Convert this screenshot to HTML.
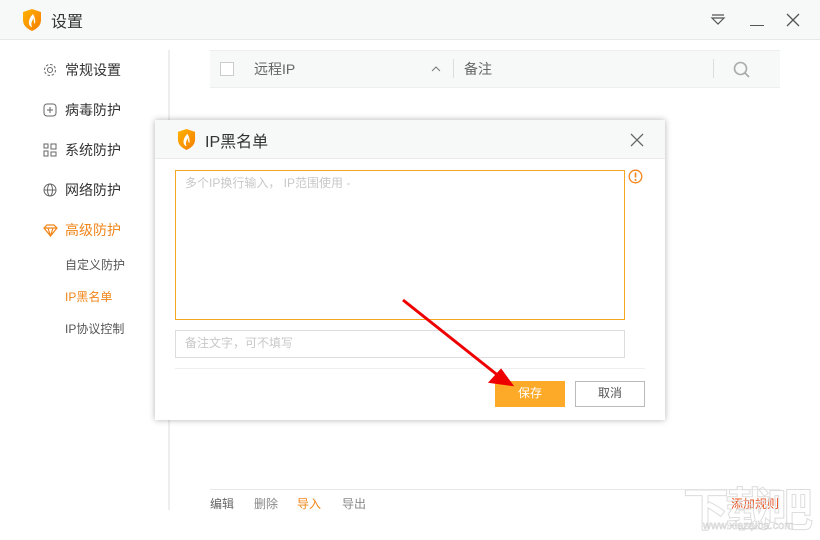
<!DOCTYPE html>
<html><head><meta charset="utf-8"><style>
*{margin:0;padding:0;box-sizing:border-box}
body{width:820px;height:540px;background:#fff;font-family:"Liberation Sans","Noto Sans CJK SC",sans-serif;position:relative;overflow:hidden;color:#333}
.a{position:absolute}
.title{left:0;top:0;width:820px;height:40px;background:#f7f8f8;border-bottom:1px solid #e8e8e8}
.nav{font-size:14px;color:#333;left:65px}
.sub{font-size:12px;color:#555;left:65px}
</style></head><body>
<div class="a title"></div>
<svg class="a" style="left:22px;top:9px" width="20" height="22" viewBox="0 0 20 22"><defs><linearGradient id="g" x1="0" y1="0" x2="1" y2="1"><stop offset="0" stop-color="#ffb300"/><stop offset="1" stop-color="#f57c00"/></linearGradient></defs><path d="M1 3 L10 0 L19 3 L19 11 Q19 18 10 22 Q1 18 1 11Z" fill="url(#g)"/><path d="M11 5 Q6 10 7 15 Q8 18 10 18 Q8 14 12 9 Q11 13 13 15 Q14 10 11 5Z" fill="#fff"/></svg>
<div class="a" style="left:51px;top:8px;font-size:16px;color:#333">设置</div>
<svg class="a" style="left:710px;top:13px" width="16" height="14"><path d="M2 2H14M2 5H14L8 11Z" stroke="#555" fill="none" stroke-width="1.2"/></svg>
<div class="a" style="left:750px;top:25px;width:14px;height:1px;background:#555"></div>
<svg class="a" style="left:786px;top:13px" width="14" height="14"><path d="M1 1L13 13M13 1L1 13" stroke="#555" stroke-width="1.3"/></svg>

<div class="a" style="left:168px;top:50px;width:2px;height:460px;background:#eee"></div>

<svg class="a" style="left:43px;top:63px" width="14" height="14"><circle cx="7" cy="7" r="2.5" fill="none" stroke="#666"/><circle cx="7" cy="7" r="5.5" fill="none" stroke="#666" stroke-dasharray="2.5 1.8"/></svg>
<div class="a nav" style="top:60px">常规设置</div>
<svg class="a" style="left:43px;top:103px" width="14" height="14"><rect x="1" y="1" width="12" height="12" rx="3" fill="none" stroke="#666"/><path d="M7 4V10M4 7H10" stroke="#666"/></svg>
<div class="a nav" style="top:100px">病毒防护</div>
<svg class="a" style="left:43px;top:143px" width="14" height="14"><rect x="1" y="1" width="4" height="4" fill="none" stroke="#666"/><rect x="1" y="8" width="4" height="5" fill="none" stroke="#666"/><rect x="8" y="1" width="5" height="5" fill="none" stroke="#666"/><rect x="8" y="9" width="5" height="4" fill="none" stroke="#666"/></svg>
<div class="a nav" style="top:140px">系统防护</div>
<svg class="a" style="left:43px;top:183px" width="14" height="14"><circle cx="7" cy="7" r="6" fill="none" stroke="#666"/><ellipse cx="7" cy="7" rx="2.5" ry="6" fill="none" stroke="#666"/><path d="M1 7H13" stroke="#666"/></svg>
<div class="a nav" style="top:180px">网络防护</div>
<svg class="a" style="left:43px;top:224px" width="15" height="13"><path d="M1 4L4 1H11L14 4L7.5 12Z M1 4H14 M5 4L7.5 12L10 4" fill="none" stroke="#f08519" stroke-width="1.2"/></svg>
<div class="a nav" style="top:220px;color:#f08519">高级防护</div>
<div class="a sub" style="top:256px">自定义防护</div>
<div class="a sub" style="top:288px;color:#f08519">IP黑名单</div>
<div class="a sub" style="top:320px">IP协议控制</div>

<div class="a" style="left:210px;top:50px;width:570px;height:38px;background:#f7f8f8;border-top:1px solid #eee;border-bottom:1px solid #eee"></div>
<div class="a" style="left:220px;top:62px;width:14px;height:14px;border:1px solid #ccc;background:#fff"></div>
<div class="a" style="left:254px;top:59px;font-size:14px;color:#666">远程IP</div>
<svg class="a" style="left:431px;top:65px" width="10" height="7"><path d="M1 6L5 2L9 6" stroke="#777" fill="none"/></svg>
<div class="a" style="left:453px;top:59px;width:1px;height:19px;background:#ddd"></div>
<div class="a" style="left:464px;top:59px;font-size:14px;color:#666">备注</div>
<div class="a" style="left:713px;top:59px;width:1px;height:19px;background:#ddd"></div>
<svg class="a" style="left:733px;top:61px" width="18" height="18"><circle cx="7.5" cy="7.5" r="6" fill="none" stroke="#aaa" stroke-width="1.6"/><path d="M12 12L16 16" stroke="#aaa" stroke-width="1.8"/></svg>

<div class="a" style="left:210px;top:489px;width:570px;height:1px;background:#e8e8e8"></div>
<div class="a" style="left:210px;top:495px;font-size:12px;color:#666">编辑</div>
<div class="a" style="left:254px;top:495px;font-size:12px;color:#888">删除</div>
<div class="a" style="left:297px;top:495px;font-size:12px;color:#f08519">导入</div>
<div class="a" style="left:342px;top:495px;font-size:12px;color:#888">导出</div>
<div class="a" style="left:731px;top:495px;font-size:12px;color:#e84c1a">添加规则</div>
<div class="a" style="left:683px;top:474px;font-size:46px;font-weight:bold;color:transparent;-webkit-text-stroke:1px #ddd;letter-spacing:-4px">下载吧</div>
<div class="a" style="left:703px;top:520px;font-size:11px;color:transparent;-webkit-text-stroke:0.5px #ccc">www.xiazaiba.com</div>

<div class="a" style="left:155px;top:120px;width:510px;height:300px;background:#fff;box-shadow:0 0 6px rgba(0,0,0,.3)">
 <div class="a" style="left:0;top:0;width:510px;height:39px;background:#f7f8f8;border-bottom:1px solid #eaeaea"></div>
</div>
<svg class="a" style="left:177px;top:129px" width="19" height="21" viewBox="0 0 20 22"><path d="M1 3 L10 0 L19 3 L19 11 Q19 18 10 22 Q1 18 1 11Z" fill="url(#g)"/><path d="M11 5 Q6 10 7 15 Q8 18 10 18 Q8 14 12 9 Q11 13 13 15 Q14 10 11 5Z" fill="#fff"/></svg>
<div class="a" style="left:205px;top:128px;font-size:16px;color:#333">IP黑名单</div>
<svg class="a" style="left:630px;top:133px" width="14" height="14"><path d="M1 1L13 13M13 1L1 13" stroke="#666" stroke-width="1.3"/></svg>
<div class="a" style="left:175px;top:170px;width:450px;height:150px;border:1px solid #f5a623"></div>
<div class="a" style="left:185px;top:174px;font-size:12px;color:#c8c8c8">多个IP换行输入， IP范围使用 -</div>
<svg class="a" style="left:628px;top:169px" width="15" height="15"><circle cx="7.5" cy="7.5" r="6.3" fill="none" stroke="#f08519" stroke-width="1.3"/><path d="M7.5 3.5V8.5" stroke="#f08519" stroke-width="1.6"/><circle cx="7.5" cy="11" r="1" fill="#f08519"/></svg>
<div class="a" style="left:175px;top:330px;width:450px;height:28px;border:1px solid #ddd"></div>
<div class="a" style="left:185px;top:334px;font-size:12px;color:#c8c8c8">备注文字，可不填写</div>
<div class="a" style="left:175px;top:368px;width:470px;height:1px;background:#eee"></div>
<div class="a" style="left:495px;top:381px;width:70px;height:26px;background:#fcaa28;color:#fff;font-size:12px;text-align:center;line-height:24px">保存</div>
<div class="a" style="left:575px;top:381px;width:70px;height:26px;border:1px solid #bbb;color:#555;font-size:12px;text-align:center;line-height:22px">取消</div>
<svg class="a" style="left:0;top:0" width="820" height="540"><path d="M403 300L500 377" stroke="#e00" stroke-width="3"/><path d="M512 385L490 382L501 370Z" fill="#e00" stroke="#e00" stroke-width="2"/></svg>
</body></html>
